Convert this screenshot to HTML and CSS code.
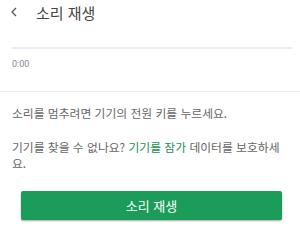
FILE: index.html
```html
<!DOCTYPE html>
<html lang="ko">
<head>
<meta charset="utf-8">
<link rel="stylesheet" href="styles.css">
</head>
<body>
<div class="page">
  <header class="topbar">
    <svg class="back" width="8" height="10" viewBox="0 0 8 10"><path d="M6 1 L2 5 L6 9" fill="none" stroke="#555" stroke-width="1.3"/></svg>
    <h1 class="title">소리 재생</h1>
  </header>
  <section class="player">
    <div class="track"></div>
    <div class="time">0:00</div>
  </section>
  <section class="info">
    <p class="msg">소리를 멈추려면 기기의 전원 키를 누르세요.</p>
    <p class="msg">기기를 찾을 수 없나요? <span class="link">기기를 잠가</span> 데이터를 보호하세요.</p>
  </section>
  <div class="actions">
    <button class="play">소리 재생</button>
  </div>
</div>
</body>
</html>
```
FILE: styles.css
```css
* { box-sizing: border-box; }
html, body { margin: 0; padding: 0; background: #fff; }
body {
  font-family: "Noto Sans CJK KR", "Noto Sans", sans-serif;
  color: #666;
  width: 300px;
  height: 242px;
  overflow: hidden;
}
.topbar {
  display: flex;
  align-items: center;
  height: 26px;
  padding-left: 10px;
}
.back { margin-right: 18px; margin-top: -2px; }
.title {
  margin: 0;
  font-size: 15px;
  line-height: 20px;
  font-weight: 400;
  color: #444;
}
.player {
  padding: 21px 8px 0 12px;
  border-bottom: 1px solid #eee;
  height: 66px;
}
.track {
  height: 2px;
  background: #e9ebf6;
}
.time {
  margin-top: 9px;
  font-size: 9px;
  line-height: 12px;
  color: #888;
  font-family: "Roboto", sans-serif;
}
.info {
  padding: 13px 10px 0 12px;
}
.msg {
  margin: 0 0 18px 0;
  font-size: 11.8px;
  line-height: 16px;
}
.link { color: #1a8f50; }
.actions {
  display: flex;
  justify-content: center;
  padding-top: 2px;
  padding-left: 3px;
}
.play {
  width: 261px;
  height: 29px;
  border: none;
  border-radius: 2px;
  background: #1b9c58;
  color: #fff;
  font-family: "Noto Sans CJK KR", sans-serif;
  font-size: 13px;
  box-shadow: 0 1px 2px rgba(0,0,0,0.35);
}
```
